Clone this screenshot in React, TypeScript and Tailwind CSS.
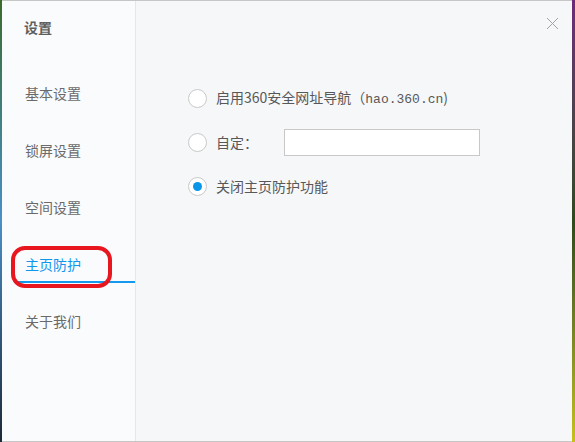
import React, { useState } from 'react';

const menu = ['基本设置', '锁屏设置', '空间设置', '主页防护', '关于我们'];

function Radio({ checked }: { checked?: boolean }) {
  return (
    <span className="w-[19px] h-[19px] rounded-full border border-[#c9c9c9] bg-white flex items-center justify-center shrink-0">
      {checked && <span className="w-[9px] h-[9px] rounded-full bg-[#0a96e8]" />}
    </span>
  );
}

export default function App() {
  const [active] = useState(3);
  const [mode] = useState(2);

  return (
    <div className="w-[575px] h-[442px] flex overflow-hidden font-['Noto_Sans_CJK_SC',sans-serif]">
      <div className="w-[2px] bg-gradient-to-b from-[#3d6b2a] via-[#4a8fc7] to-[#1c2a3a]" />
      <div className="w-[570px] flex border-t border-b border-[#c6c6c6] relative">
        {/* sidebar */}
        <div className="w-[134px] bg-[#fafbfd] border-r border-[#e6e7ea] flex flex-col">
          <div className="h-[52px] flex items-center pl-[22px] text-[14px] font-bold text-[#5f5f5f]">设置</div>
          <div className="flex flex-col gap-[21px] pt-[22px]">
            {menu.map((m, i) => (
              <div
                key={m}
                className={`relative h-[36px] flex items-center pl-[23px] text-[14px] ${
                  i === active ? 'text-[#1096ec]' : 'text-[#6a6a6a]'
                }`}
              >
                {m}
                {i === active && (
                  <span className="absolute left-[12px] right-0 -bottom-px h-[2px] bg-[#1499ee]" />
                )}
              </div>
            ))}
          </div>
        </div>

        {/* main */}
        <div className="flex-1 bg-[#f6f7f9] relative">
          <button className="absolute right-[13px] top-[16px] w-[13px] h-[13px]">
            <svg viewBox="0 0 13 13" width="13" height="13">
              <path d="M1 1 L12 12 M12 1 L1 12" stroke="#a3a3a3" strokeWidth="1" fill="none" />
            </svg>
          </button>
          <div className="flex flex-col pl-[52px] pt-[87px] gap-[24px] text-[14px] text-[#585858]">
            <label className="flex items-center gap-[9px] h-[20px]">
              <Radio checked={mode === 0} />
              <span>
                启用360安全网址导航（
                <span className="font-['Liberation_Mono',monospace] text-[13px]">hao.360.cn</span>)
              </span>
            </label>
            <label className="flex items-center h-[20px]">
              <Radio checked={mode === 1} />
              <span className="ml-[9px] w-[68px]">自定：</span>
              <input className="w-[196px] h-[27px] border border-[#c8c8c8] bg-white outline-none px-2" />
            </label>
            <label className="flex items-center gap-[9px] h-[20px]">
              <Radio checked={mode === 2} />
              <span>关闭主页防护功能</span>
            </label>
          </div>
        </div>

        {/* annotation */}
        <div className="absolute left-[9px] top-[245px] w-[101px] h-[42px] border-[4px] border-[#e8161f] rounded-[14px] pointer-events-none" />
      </div>
      <div className="w-[3px] bg-gradient-to-b from-[#6b2a7a] via-[#2e4a1d] to-[#c8c21a]" />
    </div>
  );
}
